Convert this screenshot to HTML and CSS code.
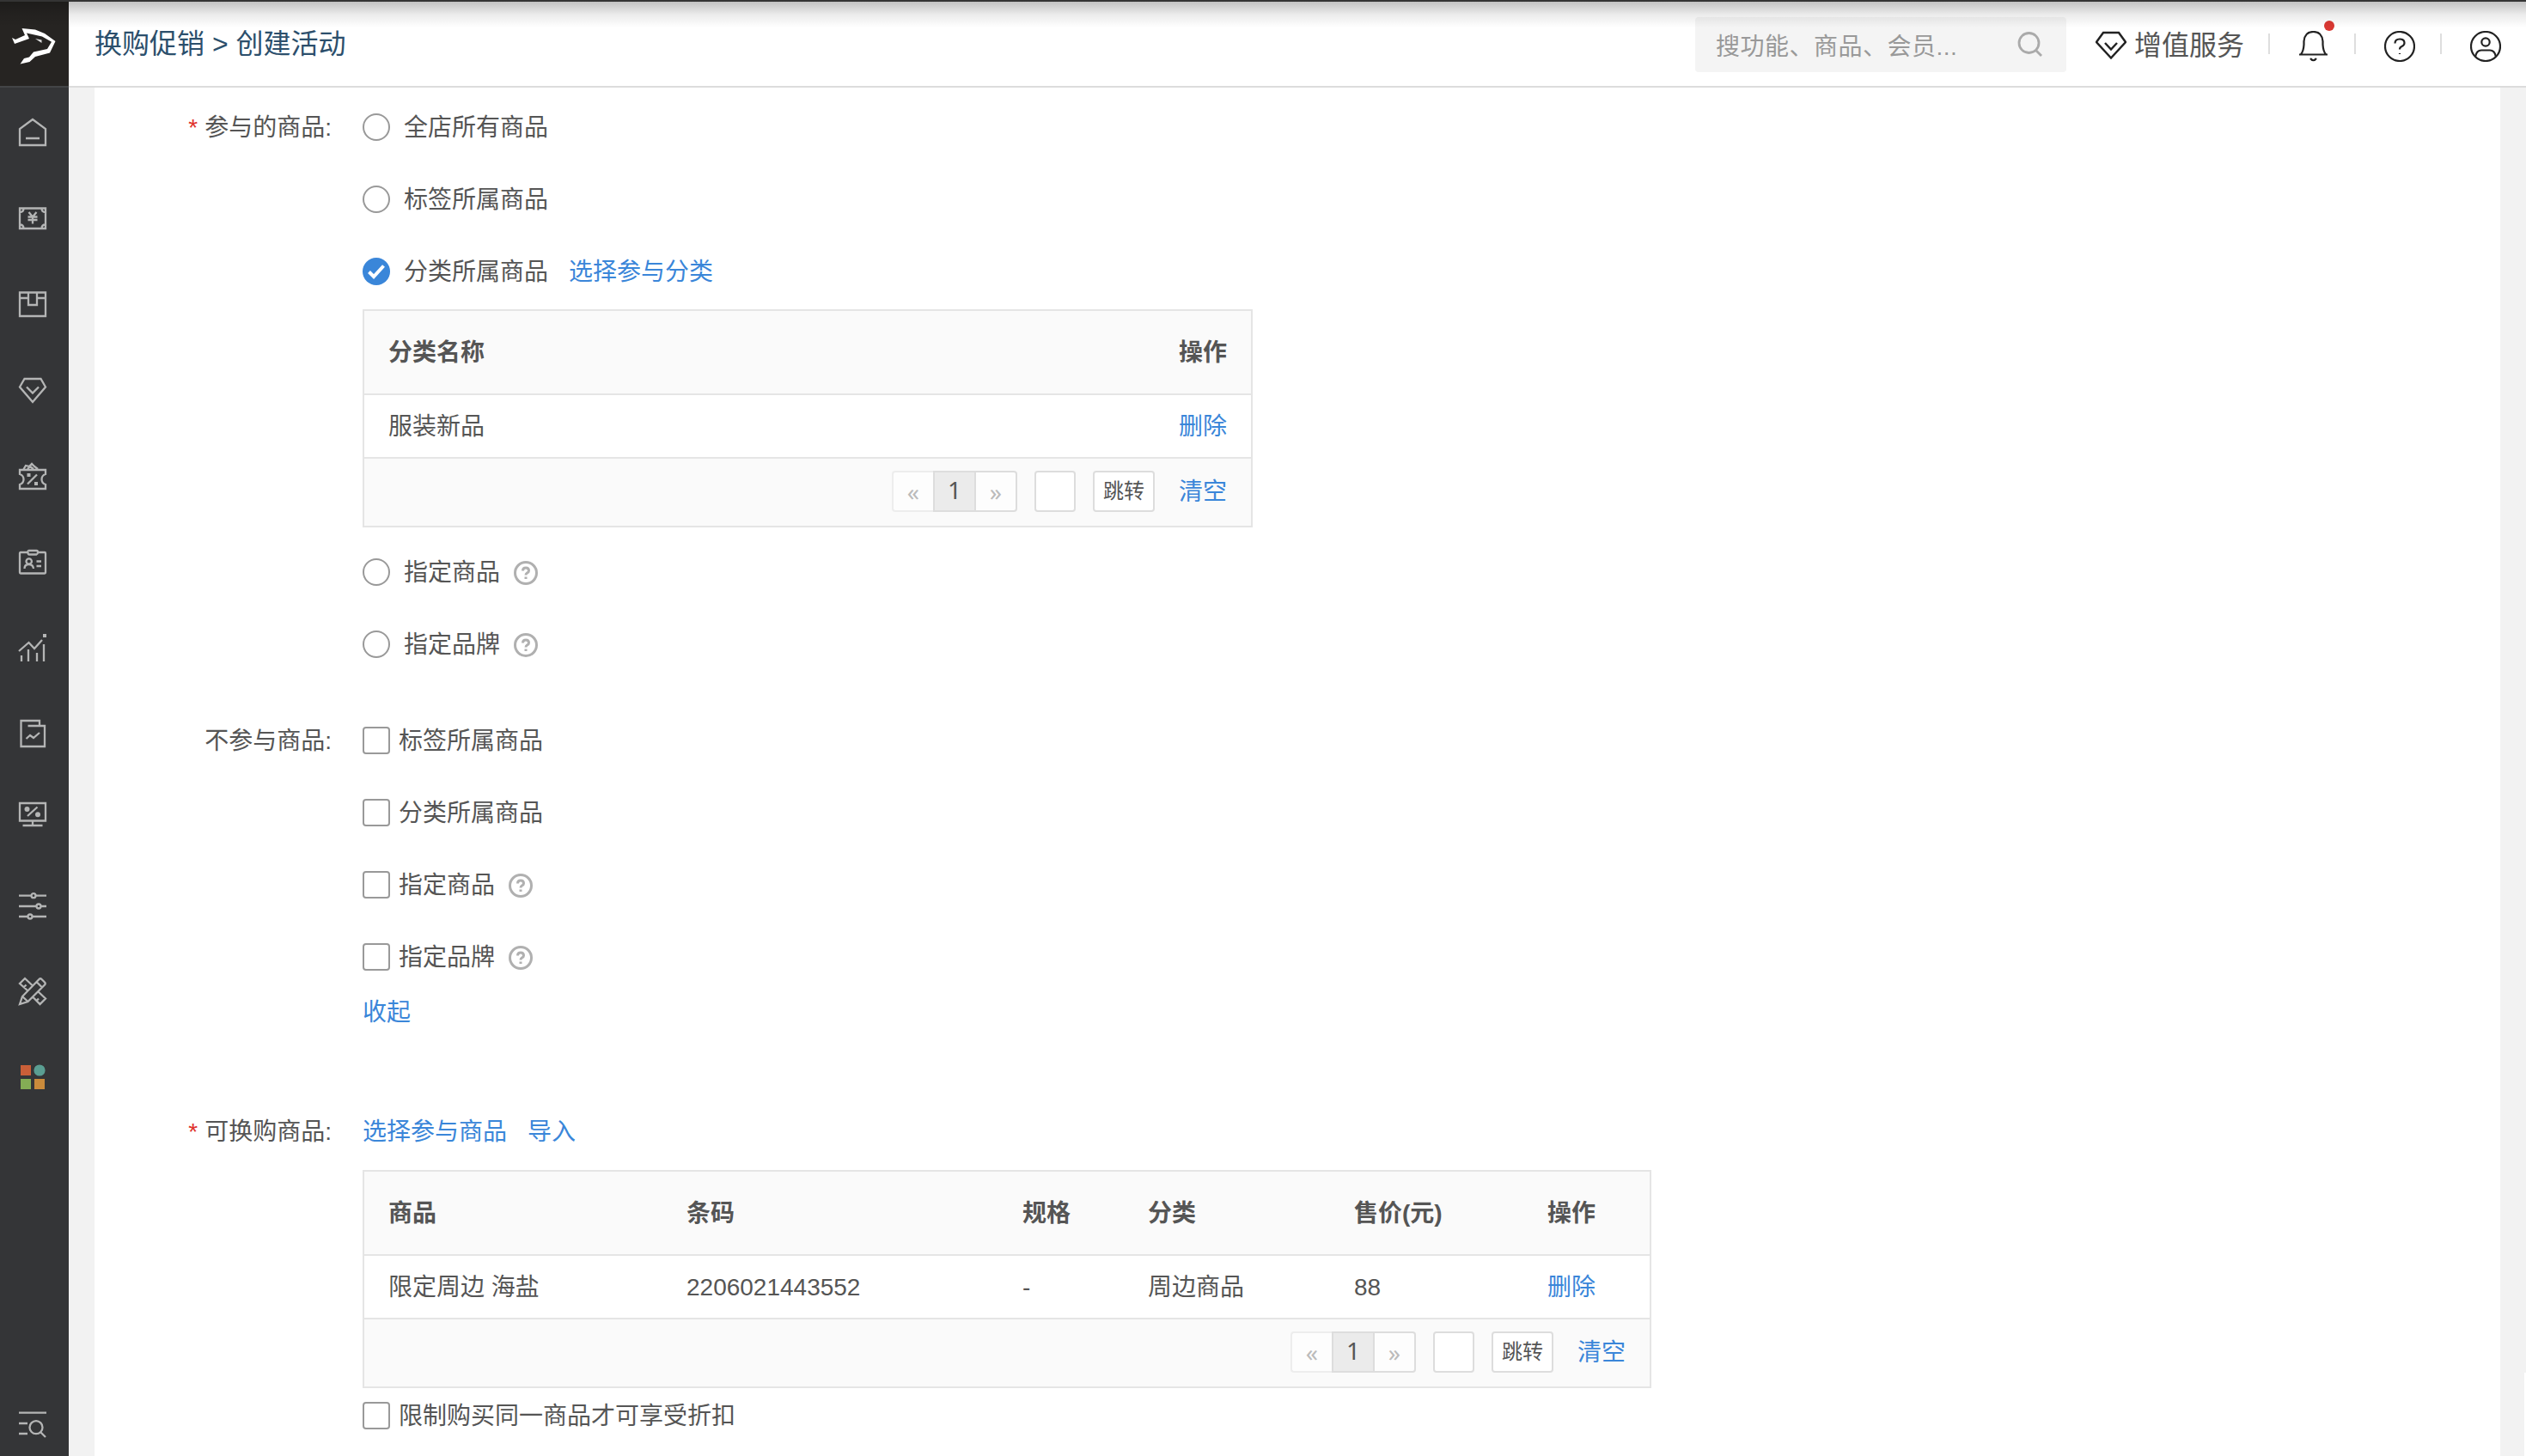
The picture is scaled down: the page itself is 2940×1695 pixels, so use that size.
FILE: index.html
```html
<!DOCTYPE html>
<html lang="zh-CN">
<head>
    <meta charset="UTF-8">
    <title>换购促销 - 创建活动</title>
    <link rel="stylesheet" href="styles.css">
</head>
<body>
    <!-- Sidebar -->
    <div class="sidebar">
        <div class="logo">
            <svg width="80" height="100" viewBox="0 0 80 100"><path fill="#fff" d="M14 44L18 46L29 41L25.500 33L41 34.500L52 39L64.500 48L58 61.500L41 66L34.500 72L23.500 74.500L28 68L34 66.500L39 60.500L55 57L60 48.800L49 42.500L31 38.500L34 45L17 51Z"/><path fill="#ddd" d="M41 45L48.500 46.500V50Z"/></svg>
        </div>
        <div class="menu">
            <div class="menu-item"><svg class="icon" viewBox="0 0 32 32"><path d="M16 1L1 12V31H31V12ZM8 23H24"/></svg></div>
            <div class="menu-item"><svg class="icon" viewBox="0 0 32 32"><path d="M1 4.500H31V28H1ZM1 9Q5.500 9 5.500 4.500M26.500 4.500Q26.500 9 31 9M1 23.500Q5.500 23.500 5.500 28M26.500 28Q26.500 23.500 31 23.500M11.500 9L16 14.500L20.500 9M10.500 14.500H21.500M10.500 18H21.500M16 14.500V22.500"/></svg></div>
            <div class="menu-item"><svg class="icon" viewBox="0 0 32 32"><path d="M1 2.500H31V30H1ZM1 9H11M21 9H31M11 2.500V17H21V2.500"/></svg></div>
            <div class="menu-item"><svg class="icon" viewBox="0 0 32 32"><path d="M6.500 3H25.500L31 12.500L16 30L1 12.500ZM9 12.500L16 19.500L23 12.500"/></svg></div>
            <div class="menu-item"><svg class="icon" viewBox="0 0 32 32"><path d="M1 9H31V14Q26.500 15.500 26.500 20T31 26V31H1V26Q5.500 24.500 5.500 20T1 14ZM10 25.500L21 14.500M5 9L8 4L12 5L15 2L18 5L22 8M10 8L13 5L17 8"/><path class="solid" d="M9.500 13H13.500V17H9.500ZM18 23H22V27H18Z"/></svg></div>
            <div class="menu-item"><svg class="icon" viewBox="0 0 32 32"><path d="M10.500 5H2Q1 5 1 6V28.500Q1 29.500 2 29.500H30Q31 29.500 31 28.500V6Q31 5 30 5H22M12 3H20.500Q22 3 22 5T20.500 7.500H12Q10.500 7.500 10.500 5T12 3M6.500 24Q6.500 19 11.500 19T17 24M20.500 15.500H26M20.500 21H26"/><circle cx="11.700" cy="15.500" r="3.200"/></svg></div>
            <div class="menu-item"><svg class="icon" viewBox="0 0 32 32"><path d="M0 20L11.500 10L18 17L27 7M3 25V32M11 18V32M21 22V32M29 12V32"/><path class="solid" d="M28 0H32V4H28Z"/></svg></div>
            <div class="menu-item"><svg class="icon" viewBox="0 0 32 32"><path d="M10.500 7H30V31H2.500V1H24V7M8.500 22L13 18L17 21L24 15"/></svg></div>
            <div class="menu-item"><svg class="icon" viewBox="0 0 32 32"><path d="M1 -3H31V17.500H1ZM16 17.500V23M4.500 23H27.500M10 12L21.500 1.500"/><circle class="solid" cx="9.500" cy="4" r="3"/><circle class="solid" cx="22" cy="10.300" r="3"/></svg></div>
            <div class="menu-item"><svg class="icon" viewBox="0 0 32 32"><path d="M0 4.700H14.500M19.500 4.700H32M0 17H20.500M25.500 17H32M0 29H10.500M15.500 29H32"/><circle cx="17" cy="4.700" r="2.500"/><circle cx="23" cy="17" r="2.500"/><circle cx="13" cy="29" r="2.500"/></svg></div>
            <div class="menu-item"><svg class="icon" viewBox="0 0 32 32"><path d="M1 31L4 22L23.500 2Q25 .5 26.500 2L30 5.500Q31.500 7 30 8.500L10.500 28ZM4 22L10.500 28M20.500 5L27 11.500M10.500 15.500L1 7L7 1L16 9.500M5.500 11.500L8.500 8.500M22 16L31 24.500L24.500 31L16.500 23M20.500 27L23 24.500"/></svg></div>
            <div class="menu-item"><svg class="icon apps" viewBox="0 0 32 32"><path fill="#c95f38" d="M2 2H14V14H2Z"/><circle fill="#5a9e92" cx="24" cy="8" r="6.600"/><path fill="#84ad55" d="M2 18H14V30H2Z"/><path fill="#ca8b3b" d="M18 18H30V30H18Z"/></svg></div>
        </div>
        <div class="menu-search">
            <svg class="icon" viewBox="0 0 32 32"><path d="M0 2.700H32M0 15H10M0 27H10M25.500 25.500L31 31"/><circle cx="20" cy="19.700" r="7.500"/></svg>
        </div>
    </div>

    <div class="main">
        <!-- Header -->
        <div class="header">
            <div class="breadcrumb">换购促销 &gt; 创建活动</div>
            <div class="search">
                <span>搜功能、商品、会员...</span>
                <svg width="30" height="30" viewBox="0 0 30 30"><circle cx="13.500" cy="13" r="11.500"/><path d="M21.500 21.500L28 28"/></svg>
            </div>
            <div class="vip">
                <svg width="36" height="34" viewBox="0 0 36 34"><path d="M9 2H27L35 13L18 31.500L1 13ZM11 14L18 21.500L25 14"/></svg>
                <span>增值服务</span>
            </div>
            <div class="tool">
                <svg width="36" height="36" viewBox="0 0 36 36"><path d="M1 27.500H34M3 27Q6 24 6.500 16V12Q7.500 1 17.500 1T28.500 12V16Q29 24 32 27M14 32Q17.500 36.500 21 32"/></svg>
                <i class="dot"></i>
            </div>
            <div class="tool">
                <svg width="36" height="36" viewBox="0 0 36 36"><circle cx="18" cy="18" r="17"/><path d="M12.500 14.500Q12.500 9.500 18 9.500T23.500 14Q23.500 16.500 20.500 18Q18 19 18 21.500M18 26V27"/></svg>
            </div>
            <div class="tool">
                <svg width="36" height="36" viewBox="0 0 36 36"><circle cx="18" cy="18" r="17"/><circle cx="18" cy="13" r="4.700"/><path d="M6 30Q7.500 22.500 13 22.500H23Q28.500 22.500 30 30"/></svg>
            </div>
        </div>

        <!-- Form -->
        <div class="content">
            <div class="form-row">
                <div class="label"><em>*</em>参与的商品:</div>
                <div class="field">
                    <div class="option"><i class="radio"></i>全店所有商品</div>
                    <div class="option"><i class="radio"></i>标签所属商品</div>
                    <div class="option">
                        <i class="radio checked"><svg width="32" height="32" viewBox="0 0 32 32"><path d="M7.500 16.500L13 22L24.500 9.500"/></svg></i>分类所属商品
                        <a class="link-next">选择参与分类</a>
                    </div>
                    <div class="table category-table">
                        <div class="tr th"><span>分类名称</span><span>操作</span></div>
                        <div class="tr"><span>服装新品</span><a>删除</a></div>
                        <div class="pager">
                            <div class="pages"><span class="prev">«</span><span class="current">1</span><span class="next">»</span></div>
                            <div class="page-input"></div>
                            <div class="jump">跳转</div>
                            <a>清空</a>
                        </div>
                    </div>
                    <div class="option"><i class="radio"></i>指定商品<svg class="help" viewBox="0 0 28 28"><circle cx="14" cy="14" r="12.500"/><path d="M10.500 11.500Q10.500 8 14 8T17.500 11.500Q17.500 13 15.500 14Q14 15 14 16.500M14 18.500V21"/></svg></div>
                    <div class="option"><i class="radio"></i>指定品牌<svg class="help" viewBox="0 0 28 28"><circle cx="14" cy="14" r="12.500"/><path d="M10.500 11.500Q10.500 8 14 8T17.500 11.500Q17.500 13 15.500 14Q14 15 14 16.500M14 18.500V21"/></svg></div>
                </div>
            </div>

            <div class="form-row exclude">
                <div class="label">不参与商品:</div>
                <div class="field">
                    <div class="option"><i class="checkbox"></i>标签所属商品</div>
                    <div class="option"><i class="checkbox"></i>分类所属商品</div>
                    <div class="option"><i class="checkbox"></i>指定商品<svg class="help" viewBox="0 0 28 28"><circle cx="14" cy="14" r="12.500"/><path d="M10.500 11.500Q10.500 8 14 8T17.500 11.500Q17.500 13 15.500 14Q14 15 14 16.500M14 18.500V21"/></svg></div>
                    <div class="option"><i class="checkbox"></i>指定品牌<svg class="help" viewBox="0 0 28 28"><circle cx="14" cy="14" r="12.500"/><path d="M10.500 11.500Q10.500 8 14 8T17.500 11.500Q17.500 13 15.500 14Q14 15 14 16.500M14 18.500V21"/></svg></div>
                    <a class="collapse">收起</a>
                </div>
            </div>

            <div class="form-row exchange">
                <div class="label"><em>*</em>可换购商品:</div>
                <div class="field">
                    <div class="option"><a>选择参与商品</a><a class="link-next">导入</a></div>
                    <div class="table goods-table">
                        <div class="tr th"><span>商品</span><span>条码</span><span>规格</span><span>分类</span><span>售价(元)</span><span>操作</span></div>
                        <div class="tr"><span>限定周边 海盐</span><span>2206021443552</span><span>-</span><span>周边商品</span><span>88</span><a>删除</a></div>
                        <div class="pager">
                            <div class="pages"><span class="prev">«</span><span class="current">1</span><span class="next">»</span></div>
                            <div class="page-input"></div>
                            <div class="jump">跳转</div>
                            <a>清空</a>
                        </div>
                    </div>
                    <div class="option limit"><i class="checkbox"></i>限制购买同一商品才可享受折扣</div>
                </div>
            </div>
        </div>
    </div>

    <div class="top-shadow"></div>
    <div class="side-tab"></div>
</body>
</html>
```
FILE: styles.css
```css
* {
    box-sizing: border-box;
}

body {
    margin: 0;
    width: 2940px;
    height: 1695px;
    overflow: hidden;
    display: flex;
    position: relative;
    font-family: "Liberation Sans", "Noto Sans CJK SC", sans-serif;
    font-size: 28px;
    color: #555;
    background-color: #f2f2f2;
}

a {
    color: #3a86d9;
}

i, em {
    font-style: normal;
}

svg {
    display: block;
    fill: none;
}

/* Sidebar */
.sidebar {
    width: 80px;
    height: 1695px;
    flex-shrink: 0;
    display: flex;
    flex-direction: column;
    background-color: #343537;
}

.logo {
    height: 102px;
    background-color: #262422;
    border-bottom: 2px solid #434547;
}

.menu {
    padding-top: 2px;
}

.menu-item {
    height: 100px;
    padding: 34px 0 0 22px;
}

.menu-search {
    margin-top: auto;
    padding: 0 0 21px 22px;
}

.icon {
    width: 32px;
    height: 32px;
    overflow: visible;
    stroke: #b4b5b5;
    stroke-width: 2.3;
}

.icon .solid {
    fill: #b4b5b5;
    stroke: none;
}

.icon.apps {
    stroke: none;
}

/* Header */
.main {
    flex: 1;
}

.header {
    height: 102px;
    display: flex;
    align-items: center;
    padding: 4px 29px 0 30px;
    background-color: #fff;
    border-bottom: 2px solid #dcdcdc;
}

.breadcrumb {
    margin-right: auto;
    font-size: 32px;
    line-height: 48px;
    padding-bottom: 2px;
    color: #2c4f6c;
}

.search {
    width: 432px;
    height: 64px;
    display: flex;
    align-items: center;
    justify-content: space-between;
    padding: 0 27px 0 24px;
    border-radius: 4px;
    background-color: #f4f4f4;
    letter-spacing: 0.5px;
    color: #999;
}

.search svg {
    stroke: #aaa;
    stroke-width: 2.8;
}

.vip {
    display: flex;
    align-items: center;
    margin: 2px 28px 0 34px;
    font-size: 32px;
    line-height: 40px;
}

.vip svg {
    margin-right: 9px;
    stroke: #222;
    stroke-width: 2.5;
}

.tool {
    width: 100px;
    height: 36px;
    margin-top: 4px;
    padding-left: 35px;
    position: relative;
    background: linear-gradient(#dedede, #dedede) 0 3px / 2px 24px no-repeat;
}

.tool:last-child {
    width: 71px;
}

.tool svg {
    stroke: #222;
    stroke-width: 2.2;
}

.dot {
    position: absolute;
    left: 65px;
    top: -12px;
    width: 12px;
    height: 12px;
    border-radius: 50%;
    background-color: #d93832;
}

/* Form */
.content {
    width: 2800px;
    height: 1593px;
    margin-left: 30px;
    padding-top: 4px;
    overflow: hidden;
    background-color: #fff;
}

.form-row {
    display: flex;
}

.label {
    width: 276px;
    margin-right: 36px;
    text-align: right;
    line-height: 86px;
}

.label em {
    margin-right: 8px;
    color: #e0332c;
}

.option {
    height: 84px;
    display: flex;
    align-items: center;
    padding-top: 2px;
    line-height: 42px;
}

.radio {
    width: 32px;
    height: 32px;
    margin: 0 16px 2px 0;
    border: 2px solid #999;
    border-radius: 50%;
}

.radio.checked {
    border: none;
    background-color: #3a86d9;
}

.radio svg {
    stroke: #fff;
    stroke-width: 4;
}

.checkbox {
    width: 32px;
    height: 32px;
    margin: 0 10px 2px 0;
    border: 2px solid #999;
    border-radius: 4px;
}

.help {
    width: 28px;
    height: 28px;
    margin-left: 16px;
    stroke: #b0b0b0;
    stroke-width: 3;
}

.link-next {
    margin-left: 24px;
}

.exclude {
    margin-top: 28px;
}

.collapse {
    display: block;
    margin-top: 2px;
    line-height: 42px;
}

.exchange {
    margin-top: 75px;
}

/* Tables */
.table {
    border: 2px solid #e5e5e5;
    line-height: 42px;
}

.category-table {
    width: 1036px;
    margin: 2px 0 10px;
}

.goods-table {
    width: 1500px;
    margin-top: 3px;
}

.tr {
    height: 74px;
    display: grid;
    align-items: center;
    padding: 2px 28px 0;
    border-bottom: 2px solid #e5e5e5;
}

.category-table .tr {
    grid-template-columns: 1fr 56px;
}

.goods-table .tr {
    grid-template-columns: 347px 391px 146px 240px 225px 1fr;
}

.th {
    height: 98px;
    font-weight: bold;
    background-color: #fafafa;
}

.pager {
    height: 78px;
    display: flex;
    align-items: center;
    justify-content: flex-end;
    padding-right: 28px;
    background-color: #fafafa;
}

/* Page buttons sit one pixel above the clear link */
.pages, .page-input, .jump {
    margin-bottom: 2px;
}

.pages {
    display: flex;
    font-family: "Noto Sans", sans-serif;
}

.pages span {
    width: 50px;
    height: 48px;
    line-height: 41px;
    text-align: center;
    border: 2px solid #ddd;
    background-color: #fff;
}

.pages .prev {
    width: 48px;
    border-color: #ededed;
    border-right: none;
    border-radius: 4px 0 0 4px;
    color: #bbb;
    line-height: 44px;
    background-color: #fdfdfd;
}

.pages .current {
    background-color: #ebebeb;
}

.pages .next {
    width: 48px;
    border-left: none;
    border-radius: 0 4px 4px 0;
    color: #bbb;
    line-height: 44px;
    background-color: #fdfdfd;
}

.page-input {
    width: 48px;
    height: 48px;
    margin-left: 20px;
    margin-right: 20px;
    border: 2px solid #ddd;
    border-radius: 4px;
    background-color: #fff;
}

.jump {
    width: 72px;
    height: 48px;
    margin-right: 28px;
    border: 2px solid #ddd;
    border-radius: 4px;
    font-size: 24px;
    line-height: 44px;
    text-align: center;
    background-color: #fff;
}

.limit {
    height: 64px;
}

/* Shadow cast by the browser toolbar */
.top-shadow {
    position: absolute;
    left: 0;
    top: 0;
    width: 100%;
    height: 32px;
    border-top: 2px solid #343434;
    background: linear-gradient(rgba(0, 0, 0, 0.24), rgba(0, 0, 0, 0.08) 50%, rgba(0, 0, 0, 0));
}

.side-tab {
    position: absolute;
    right: 0;
    bottom: 0;
    width: 2px;
    height: 97px;
    background-color: #fff;
}
```
